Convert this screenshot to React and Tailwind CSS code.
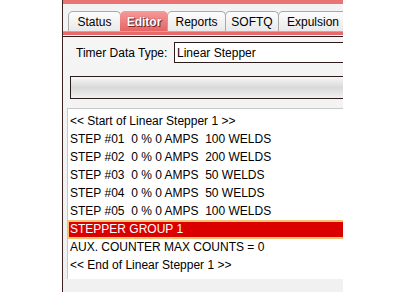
import React from "react";

const tabs = [
  { label: "Status", w: "w-[53px]" },
  { label: "Editor", w: "w-[48px]", selected: true },
  { label: "Reports", w: "w-[59px]" },
  { label: "SOFTQ", w: "w-[54px]" },
  { label: "Expulsion", w: "w-[70px]" },
];

const rows = [
  "<< Start of Linear Stepper 1 >>",
  "STEP #01  0 % 0 AMPS  100 WELDS",
  "STEP #02  0 % 0 AMPS  200 WELDS",
  "STEP #03  0 % 0 AMPS  50 WELDS",
  "STEP #04  0 % 0 AMPS  50 WELDS",
  "STEP #05  0 % 0 AMPS  100 WELDS",
  "STEPPER GROUP 1",
  "AUX. COUNTER MAX COUNTS = 0",
  "<< End of Linear Stepper 1 >>",
];

export default function App() {
  return (
    <div className="w-[400px] h-[292px] bg-white overflow-hidden font-['Liberation_Sans',Arial,sans-serif] text-[12px] text-black">
      <div className="ml-[62px] w-[281px] h-full border-l border-[#3a2222] flex flex-col overflow-hidden">
        <div className="h-[4px] bg-[#e97474] shrink-0" />
        <div className="h-[7px] bg-[#f3f3f3] shrink-0" />
        <div className="h-[20px] bg-[#f3f3f3] flex items-end pl-[6px] shrink-0">
          {tabs.map((t) =>
            t.selected ? (
              <div
                key={t.label}
                className={`${t.w} shrink-0 h-[20px] pt-[1px] rounded-t-[5px] bg-gradient-to-b from-[#f59a9a] to-[#e66464] flex items-center justify-center font-bold text-white [text-shadow:0_0_1px_#5a1a1a,1px_1px_0_#7a2a2a] -ml-[1px]`}
              >
                {t.label}
              </div>
            ) : (
              <div
                key={t.label}
                className={`${t.w} shrink-0 h-[20px] pt-[1px] rounded-t-[5px] border border-b-0 border-[#a9a9a9] bg-gradient-to-b from-[#fdfdfd] to-[#e9e9ea] flex items-center justify-center -ml-[1px]`}
              >
                {t.label}
              </div>
            )
          )}
        </div>
        <div className="h-[4px] bg-[#e86a6a] border-t border-[#f29494] shrink-0" />
        <div className="h-[1px] bg-[#f6f6f6] shrink-0" />
        <div className="h-[1px] bg-[#2c1c1c] shrink-0" />
        <div className="flex-1 flex flex-col bg-gradient-to-b from-[#f6f5f5] to-[#efefef]">
          <div className="mt-[5px] flex items-center h-[21px]">
            <span className="ml-[13px] w-[98px] shrink-0">Timer Data Type:</span>
            <div className="flex-1 h-[21px] bg-white border-y border-l border-[#2c1c1c] flex items-center pl-[2px]">
              Linear Stepper
            </div>
          </div>
          <div className="mt-[13px] ml-[7px] h-[23px] border-y border-l border-[#2c1c1c] bg-gradient-to-b from-[#f7f7f7] via-[#d9d9d9] to-[#f1f1f1]" />
          <div className="mt-[9px] ml-[4px] h-[171px] bg-white border-t border-l border-[#c8c8c8] pt-[3px]">
            {rows.map((r, i) =>
              i === 6 ? (
                <div
                  key={i}
                  className="h-[19px] -my-[0.5px] bg-[#db0000] border-y-2 border-l border-[#f6c36e] text-white flex items-center pl-[1px] whitespace-pre"
                >
                  {r}
                </div>
              ) : (
                <div key={i} className="h-[18px] flex items-center pl-[2px] whitespace-pre">
                  {r}
                </div>
              )
            )}
          </div>
          <div className="flex-1 bg-[#f1f1f1]" />
        </div>
      </div>
    </div>
  );
}
